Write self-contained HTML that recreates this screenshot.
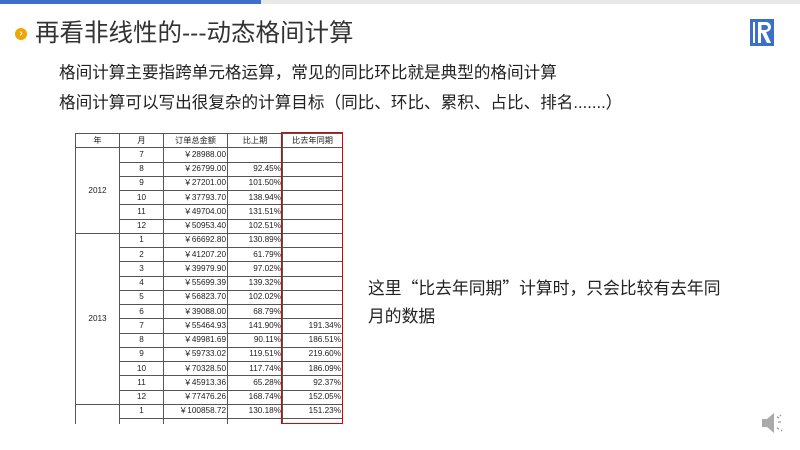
<!DOCTYPE html>
<html><head><meta charset="utf-8"><style>
body{margin:0;width:800px;height:450px;background:#fff;position:relative;overflow:hidden;font-family:"Liberation Sans","Noto Sans CJK SC",sans-serif}
.t{position:absolute;color:#222}
table{position:absolute;left:75px;top:133px;border-collapse:collapse;font-size:8.2px;font-family:"Liberation Sans","Noto Sans CJK SC",sans-serif;table-layout:fixed}
td{border:1px solid #555;height:13.25px;padding:0 1px;line-height:12px;color:#222;overflow:hidden;white-space:nowrap}
td.c{text-align:center}td.r{text-align:right}
.clip{position:absolute;left:70px;top:125px;width:290px;height:299px;overflow:hidden}
.q{font-family:"Noto Sans CJK SC",sans-serif}
</style></head><body>
<div style="position:absolute;left:0;top:0;width:261px;height:4px;background:#3b6fca"></div>
<div style="position:absolute;left:261px;top:0;width:539px;height:4px;background:#e8e8e8"></div>
<div style="position:absolute;left:15px;top:28px;width:12px;height:12px;border-radius:50%;background:#f0a500;color:#fff;font-size:10px;line-height:11px;text-align:center;font-weight:bold">›</div>
<div class="t" style="left:35px;top:20px;font-size:24.5px;color:#333;line-height:28px">再看非线性的---动态格间计算</div>
<svg style="position:absolute;left:750px;top:19px" width="24" height="27" viewBox="0 0 24 27"><rect width="24" height="27" fill="#3b6fca"/><rect x="3" y="3" width="2" height="21" fill="#fff"/><path d="M8 3h8a5 5 0 0 1 0 10l5 11h-4l-5-10h-1v10h-3z M11.5 6v5h4a2.5 2.5 0 0 0 0-5z" fill="#fff" fill-rule="evenodd"/></svg>
<div class="t" style="left:59px;top:62px;font-size:16.6px;line-height:22px;white-space:nowrap">格间计算主要指跨单元格运算，常见的同比环比就是典型的格间计算</div>
<div class="t" style="left:59px;top:92px;font-size:16.6px;line-height:22px;white-space:nowrap">格间计算可以写出很复杂的计算目标（同比、环比、累积、占比、排名.......）</div>
<div class="clip"><table style="left:5px;top:8px">
<colgroup><col style="width:44px"><col style="width:44px"><col style="width:64px"><col style="width:55px"><col style="width:60px"></colgroup>
<tr><td class="c">年</td><td class="c">月</td><td class="c">订单总金额</td><td class="c">比上期</td><td class="c">比去年同期</td></tr>
<tr><td class="c" rowspan="6">2012</td><td class="c">7</td><td class="r">￥28988.00</td><td class="r"></td><td></td></tr>
<tr><td class="c">8</td><td class="r">￥26799.00</td><td class="r">92.45%</td><td></td></tr>
<tr><td class="c">9</td><td class="r">￥27201.00</td><td class="r">101.50%</td><td></td></tr>
<tr><td class="c">10</td><td class="r">￥37793.70</td><td class="r">138.94%</td><td></td></tr>
<tr><td class="c">11</td><td class="r">￥49704.00</td><td class="r">131.51%</td><td></td></tr>
<tr><td class="c">12</td><td class="r">￥50953.40</td><td class="r">102.51%</td><td></td></tr>
<tr><td class="c" rowspan="12">2013</td><td class="c">1</td><td class="r">￥66692.80</td><td class="r">130.89%</td><td></td></tr>
<tr><td class="c">2</td><td class="r">￥41207.20</td><td class="r">61.79%</td><td></td></tr>
<tr><td class="c">3</td><td class="r">￥39979.90</td><td class="r">97.02%</td><td></td></tr>
<tr><td class="c">4</td><td class="r">￥55699.39</td><td class="r">139.32%</td><td></td></tr>
<tr><td class="c">5</td><td class="r">￥56823.70</td><td class="r">102.02%</td><td></td></tr>
<tr><td class="c">6</td><td class="r">￥39088.00</td><td class="r">68.79%</td><td></td></tr>
<tr><td class="c">7</td><td class="r">￥55464.93</td><td class="r">141.90%</td><td class="r">191.34%</td></tr>
<tr><td class="c">8</td><td class="r">￥49981.69</td><td class="r">90.11%</td><td class="r">186.51%</td></tr>
<tr><td class="c">9</td><td class="r">￥59733.02</td><td class="r">119.51%</td><td class="r">219.60%</td></tr>
<tr><td class="c">10</td><td class="r">￥70328.50</td><td class="r">117.74%</td><td class="r">186.09%</td></tr>
<tr><td class="c">11</td><td class="r">￥45913.36</td><td class="r">65.28%</td><td class="r">92.37%</td></tr>
<tr><td class="c">12</td><td class="r">￥77476.26</td><td class="r">168.74%</td><td class="r">152.05%</td></tr>
<tr><td class="c" rowspan="2"></td><td class="c">1</td><td class="r">￥100858.72</td><td class="r">130.18%</td><td class="r">151.23%</td></tr>
<tr><td></td><td></td><td></td><td></td></tr>
</table></div>
<div style="position:absolute;left:281px;top:132px;width:60px;height:290px;border:1.5px solid #e00000"></div>
<div class="t" style="left:368px;top:273px;font-size:16.8px;line-height:28px;width:400px;white-space:nowrap">这里<span class="q">“</span>比去年同期<span class="q">”</span>计算时，只会比较有去年同<br>月的数据</div>
<svg style="position:absolute;left:760px;top:410px" width="26" height="26" viewBox="0 0 26 26"><path d="M2 9h5l7-6v20l-7-6H2z" fill="#aaa"/><path d="M17 7l2 1M18 12h3M17 18l2 1M20 5l1 1M21 20l1 1" stroke="#999" stroke-width="1.3"/></svg>
</body></html>
